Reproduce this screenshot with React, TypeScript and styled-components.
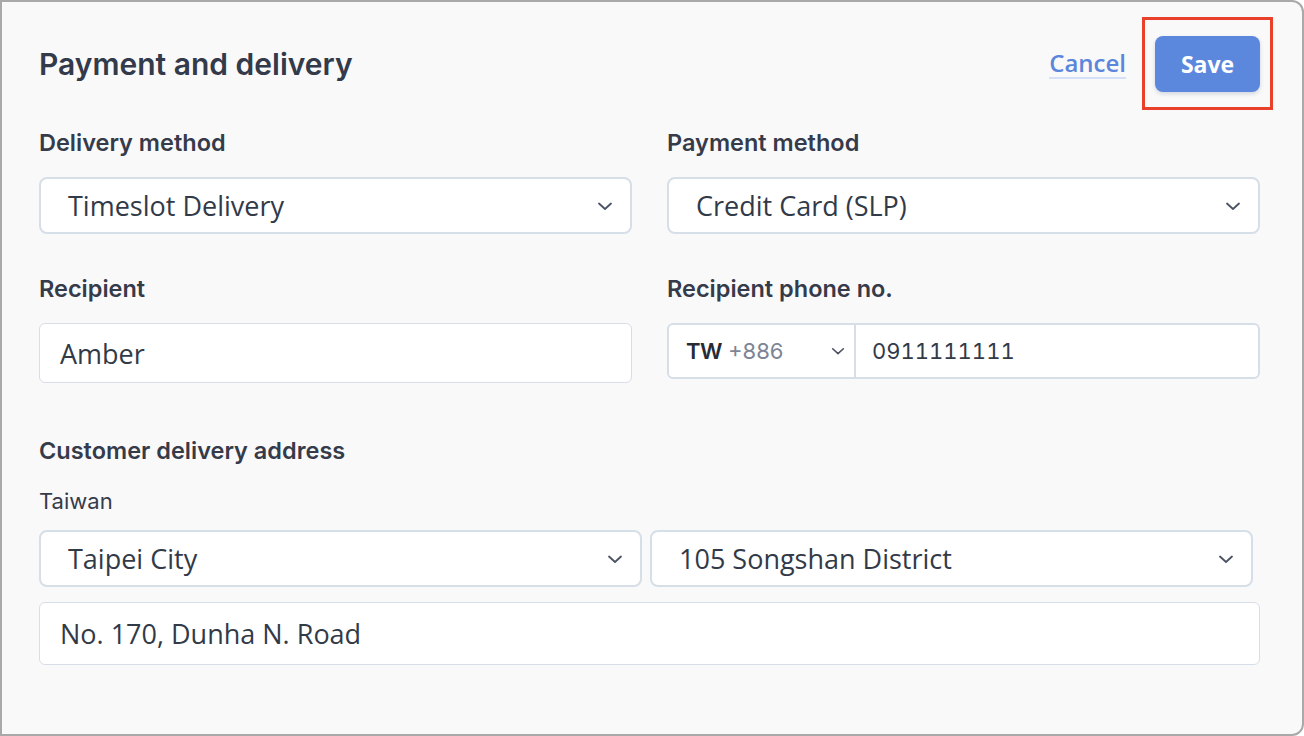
import styled, { createGlobalStyle } from 'styled-components';

const GlobalStyle = createGlobalStyle`
  html, body {
    margin: 0;
    padding: 0;
    background: #ffffff;
  }
  * {
    box-sizing: border-box;
  }
`;

const Frame = styled.div`
  width: 1304px;
  height: 736px;
  border: 2px solid #a9a9a9;
  border-radius: 0 12px 12px 0;
  background: #f9f9fa;
  padding: 15px 29px 0 37px;
  font-family: Inter, 'Noto Sans', sans-serif;
  color: #363b4a;
`;

const Header = styled.div`
  display: flex;
  align-items: center;
  justify-content: space-between;
  height: 93px;
`;

const Title = styled.h1`
  margin: 0;
  font-size: 30px;
  font-weight: 600;
  color: #333a4a;
`;

const Actions = styled.div`
  display: flex;
  align-items: center;
  gap: 16px;
`;

const CancelLink = styled.a`
  font-family: 'Open Sans', sans-serif;
  font-size: 24px;
  font-weight: 600;
  color: #5b86dc;
  text-decoration: none;
  border-bottom: 2px solid #d4e0f8;
  line-height: 28px;
  cursor: pointer;
`;

const Highlight = styled.div`
  width: 131px;
  height: 93px;
  border: 3px solid #e8402a;
  display: flex;
  align-items: center;
  justify-content: center;
`;

const SaveButton = styled.button`
  width: 105px;
  height: 56px;
  border: none;
  border-radius: 8px;
  background: #5b87dd;
  color: #ffffff;
  font-family: 'Open Sans', sans-serif;
  font-size: 23px;
  font-weight: 700;
  box-shadow: 0 2px 4px rgba(40, 60, 100, 0.18);
  cursor: pointer;
`;

const Grid = styled.div`
  display: grid;
  grid-template-columns: 593px 593px;
  column-gap: 35px;
  margin-top: 19px;
`;

const Field = styled.div`
  display: flex;
  flex-direction: column;
`;

const Label = styled.div<{ $mb?: number }>`
  font-size: 23.5px;
  font-weight: 600;
  color: #363b4a;
  line-height: 28px;
  margin-bottom: ${(p) => (p.$mb !== undefined ? p.$mb : 20)}px;
`;

const SelectBox = styled.div`
  height: 57px;
  background: #ffffff;
  border: 2px solid #d6dee8;
  border-radius: 8px;
  display: flex;
  align-items: center;
  justify-content: space-between;
  padding: 0 16px 0 27px;
  font-family: 'Open Sans', sans-serif;
  font-size: 27px;
  color: #323a48;
`;

const InputBox = styled.div<{ $h?: number }>`
  height: ${(p) => p.$h || 60}px;
  background: #ffffff;
  border: 1px solid #d6dee8;
  border-radius: 6px;
  display: flex;
  align-items: center;
  padding-left: 20px;
  font-family: 'Open Sans', sans-serif;
  font-size: 27px;
  color: #323a48;
`;

const Row = styled.div`
  margin-top: 41px;
`;

const PhoneBox = styled.div`
  height: 56px;
  background: #ffffff;
  border: 2px solid #d6dee8;
  border-radius: 6px;
  display: flex;
  align-items: stretch;
  font-family: Inter, 'Noto Sans', sans-serif;
  font-size: 22px;
`;

const CountryPart = styled.div`
  width: 187px;
  border-right: 2px solid #d6dee8;
  display: flex;
  align-items: center;
  justify-content: space-between;
  padding: 0 8px 0 17px;
`;

const CountryCode = styled.span`
  font-weight: 600;
  color: #262b36;
  letter-spacing: -0.5px;
`;

const DialCode = styled.span`
  color: #7d8494;
  margin-left: 6px;
`;

const PhoneNumber = styled.div`
  display: flex;
  align-items: center;
  padding-left: 16px;
  color: #323a48;
  font-variant-numeric: tabular-nums;
`;

const AddressSection = styled.div`
  width: 1221px;
  margin-top: 54px;
`;

const Country = styled.div`
  font-size: 22px;
  line-height: 26px;
  color: #363b4a;
  margin-top: 23px;
  margin-bottom: 16px;
`;

const CityRow = styled.div`
  display: grid;
  grid-template-columns: 603px 603px;
  column-gap: 8px;
  margin-bottom: 15px;
`;

function Chevron({ size = 18 }: { size?: number }) {
  return (
    <svg width={size} height={size} viewBox="0 0 18 18" fill="none">
      <path d="M3 6.5 L9 12 L15 6.5" stroke="#4a5263" strokeWidth="1.8" strokeLinecap="round" strokeLinejoin="round" />
    </svg>
  );
}

function App() {
  return (
    <>
      <GlobalStyle />
      <Frame>
        <Header>
          <Title>Payment and delivery</Title>
          <Actions>
            <CancelLink>Cancel</CancelLink>
            <Highlight>
              <SaveButton>Save</SaveButton>
            </Highlight>
          </Actions>
        </Header>
        <Grid>
          <Field>
            <Label>Delivery method</Label>
            <SelectBox>
              Timeslot Delivery
              <Chevron />
            </SelectBox>
          </Field>
          <Field>
            <Label>Payment method</Label>
            <SelectBox>
              Credit Card (SLP)
              <Chevron />
            </SelectBox>
          </Field>
          <Row>
            <Label>Recipient</Label>
            <InputBox>Amber</InputBox>
          </Row>
          <Row>
            <Label>Recipient phone no.</Label>
            <PhoneBox>
              <CountryPart>
                <span>
                  <CountryCode>TW</CountryCode>
                  <DialCode>+886</DialCode>
                </span>
                <Chevron size={16} />
              </CountryPart>
              <PhoneNumber>0911111111</PhoneNumber>
            </PhoneBox>
          </Row>
        </Grid>
        <AddressSection>
          <Label $mb={0}>Customer delivery address</Label>
          <Country>Taiwan</Country>
          <CityRow>
            <SelectBox>
              Taipei City
              <Chevron />
            </SelectBox>
            <SelectBox>
              105 Songshan District
              <Chevron />
            </SelectBox>
          </CityRow>
          <InputBox $h={63}>No. 170, Dunha N. Road</InputBox>
        </AddressSection>
      </Frame>
    </>
  );
}

export default App;
